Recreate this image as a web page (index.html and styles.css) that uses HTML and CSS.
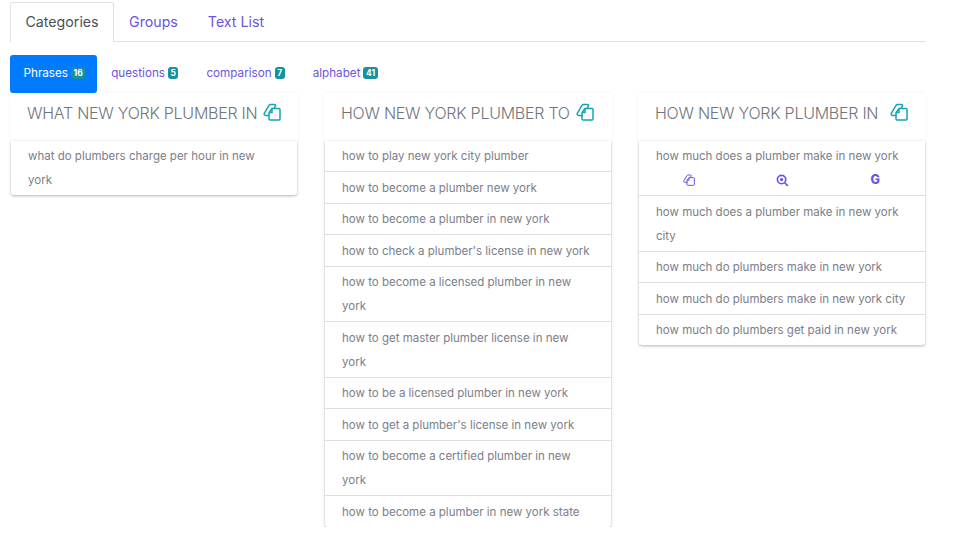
FILE: index.html
```html
<!DOCTYPE html>
<html>
<head>
  <title>Keyword results</title>
  <link rel="stylesheet" href="styles.css">
</head>
<body>

<svg class="defs" width="0" height="0">
  <symbol id="copy" viewBox="0 0 18 18">
    <path d="M6.500 12.500h-4a1.500 1.500 0 0 1-1.200-2.200l4.700-8a1.500 1.500 0 0 1 1.300-.8h4.200a1 1 0 0 1 .9 1.500l-1.400 2.500" />
    <path d="M9 5.500h7a1 1 0 0 1 1 1v9.500a1 1 0 0 1-1 1h-9a1 1 0 0 1-1-1v-6.500z" />
    <path d="M9 5.500v4h-3" />
  </symbol>
</svg>

<div class="tabs">
  <a class="tab active">Categories</a>
  <a class="tab">Groups</a>
  <a class="tab">Text List</a>
</div>

<div class="pills">
  <a class="pill active">Phrases <span class="badge">16</span></a>
  <a class="pill">questions <span class="badge">5</span></a>
  <a class="pill">comparison <span class="badge">7</span></a>
  <a class="pill">alphabet <span class="badge">41</span></a>
</div>

<div class="columns">
  <div class="column">
    <h3 class="heading">WHAT NEW YORK PLUMBER IN <svg class="heading-icon"><use href="#copy"/></svg></h3>
    <ul class="list">
      <li>what do plumbers charge per hour in new york</li>
    </ul>
  </div>

  <div class="column">
    <h3 class="heading">HOW NEW YORK PLUMBER TO <svg class="heading-icon"><use href="#copy"/></svg></h3>
    <ul class="list">
      <li>how to play new york city plumber</li>
      <li>how to become a plumber new york</li>
      <li>how to become a plumber in new york</li>
      <li>how to check a plumber's license in new york</li>
      <li>how to become a licensed plumber in new york</li>
      <li>how to get master plumber license in new york</li>
      <li>how to be a licensed plumber in new york</li>
      <li>how to get a plumber's license in new york</li>
      <li>how to become a certified plumber in new york</li>
      <li>how to become a plumber in new york state</li>
    </ul>
  </div>

  <div class="column">
    <h3 class="heading">HOW NEW YORK PLUMBER IN <svg class="heading-icon spaced"><use href="#copy"/></svg></h3>
    <ul class="list">
      <li>
        how much does a plumber make in new york
        <div class="actions">
          <svg class="action-icon"><use href="#copy"/></svg>
          <svg class="action-icon zoom" viewBox="0 0 14 14">
            <circle cx="6" cy="6" r="4.500" />
            <path d="M9.400 9.400l3.300 3.300" />
            <circle class="dot" cx="6" cy="6" r="1.800" />
          </svg>
          <span class="google">G</span>
        </div>
      </li>
      <li>how much does a plumber make in new york city</li>
      <li>how much do plumbers make in new york</li>
      <li>how much do plumbers make in new york city</li>
      <li>how much do plumbers get paid in new york</li>
    </ul>
  </div>
</div>

</body>
</html>
```

FILE: styles.css
```css
body {
  margin: 0;
  padding: 2px 34px 0 10px;
  background: #fff;
  font-family: "Inter", "Noto Sans", sans-serif;
  color: #6f7380;
}

.defs {
  position: absolute;
}

.tabs {
  display: flex;
  height: 39px;
  border-bottom: 1px solid #dee2e6;
}

.tab {
  padding: 0 14px;
  line-height: 38px;
  font-size: 14.200px;
  color: #6a55e0;
  border: 1px solid transparent;
  border-bottom: none;
}

.tab.active {
  height: 39px;
  padding: 0 14.500px;
  background: #fff;
  color: #495057;
  border-color: #dee2e6;
  border-radius: 3px 3px 0 0;
}

.pills {
  display: flex;
  margin-top: 13px;
  height: 38px;
}

.pill {
  display: flex;
  align-items: center;
  gap: 3px;
  padding: 0 14px 2px;
  font-size: 11.700px;
  color: #6a55e0;
}

.pill.active {
  padding: 0 12px 2px 13.500px;
  background: #007bff;
  color: #fff;
  border-radius: 3px;
}

.badge {
  padding: 1.500px 2.500px;
  background: #17919f;
  border-radius: 3px;
  color: #fff;
  font-size: 8.500px;
  font-weight: 700;
  line-height: 9px;
}

.columns {
  display: grid;
  grid-template-columns: repeat(3, 288px);
  gap: 26px;
  align-items: start;
}

.column {
  min-width: 0;
}

.heading {
  display: flex;
  align-items: flex-start;
  gap: 6px;
  height: 47.500px;
  margin: 0;
  padding: 10px 17px 0;
  box-sizing: border-box;
  box-shadow: 0 0 4px rgba(0, 0, 0, 0.05);
  font-size: 16px;
  font-weight: 300;
  line-height: 21px;
  letter-spacing: -0.25px;
  color: #70757c;
  white-space: nowrap;
}

.heading-icon {
  flex: none;
  width: 18px;
  height: 18px;
  fill: none;
  stroke: #17a2b8;
  stroke-width: 1.500;
}

.heading-icon.spaced {
  margin-left: 6px;
}

.list {
  margin: 0 1px;
  padding: 0;
  list-style: none;
  background: #fff;
  border-radius: 0 0 3px 3px;
  box-shadow: 0 1px 3px rgba(0, 0, 0, 0.3);
}

.list li {
  padding: 3.500px 18px 3px 17px;
  border-bottom: 1px solid #dfdfe2;
  font-size: 11.500px;
  line-height: 24px;
  color: #7b7e8a;
}

.list li:last-child {
  border-bottom: none;
}

.actions {
  display: flex;
  justify-content: space-between;
  align-items: center;
  height: 24px;
  padding: 0 27px;
}

.action-icon {
  width: 12px;
  height: 12px;
  fill: none;
  stroke: #6a55e0;
  stroke-width: 1.500;
}

.action-icon.zoom {
  width: 13px;
  height: 13px;
  stroke-width: 1.800;
}

.action-icon .dot {
  fill: #6a55e0;
  stroke: none;
}

.google {
  font-size: 12.500px;
  font-weight: 800;
  color: #6a55e0;
}
```
